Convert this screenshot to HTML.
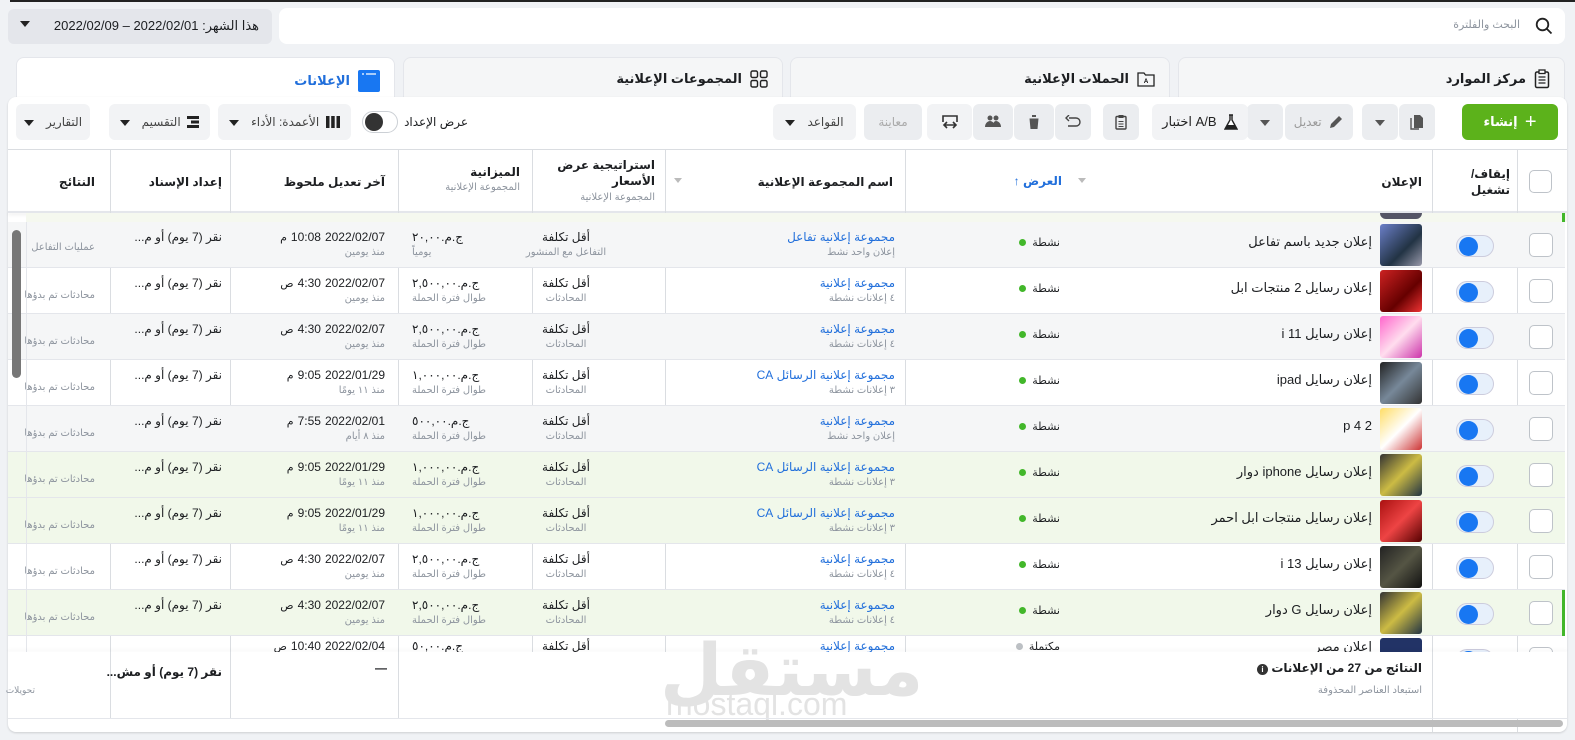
<!DOCTYPE html>
<html><head><meta charset="utf-8">
<style>
*{box-sizing:border-box;margin:0;padding:0}
body{width:1575px;height:740px;overflow:hidden;background:#f0f2f5;font-family:"Liberation Sans","DejaVu Sans",sans-serif;color:#1c1e21;position:relative;font-size:12px}
.a{position:absolute}
.r{direction:rtl;text-align:right;white-space:nowrap}
.btn{position:absolute;top:104px;height:36px;background:#ebedf0;border-radius:6px;display:flex;align-items:center;justify-content:center;font-size:12px;color:#444}
.tab{position:absolute;top:57px;height:42px;background:#f5f6f7;border-radius:8px 8px 0 0;border:1px solid #e4e6eb;border-bottom:none;font-weight:bold;font-size:13px;display:flex;align-items:center;justify-content:flex-end;padding-right:14px;gap:8px;direction:ltr}
.vl{position:absolute;width:1px;background:#dadde1}
.row{position:absolute;left:8px;width:1557px;height:46px;border-bottom:1px solid #e4e6eb}
.row>div{position:absolute}
.chk{left:1521px;top:11px;width:24px;height:24px;border:1px solid #bec3c9;border-radius:5px;background:#fff}
.tg{left:1448px;top:13px;width:38px;height:22px;border-radius:11px;background:#e7f0fb;border:1px solid #ccd}
.tg:before{content:"";position:absolute;left:2px;top:1px;width:19px;height:19px;border-radius:50%;background:#1877f2}
.th{left:1372px;top:2px;width:42px;height:42px;border-radius:3px}
.nm{right:193px;top:12px;font-size:13px}
.st{right:505px;top:14px;font-size:11px}
.st:after{content:"";display:inline-block;width:7px;height:7px;border-radius:50%;background:#42b72a;margin-right:6px}
.gs:after{background:#bcc0c4}
.l1{font-size:12px;top:8px}
.l2{font-size:10px;color:#8d949e;top:25px}
.bl{color:#216fdb}
.c5{right:670px}
.c6{left:508px;width:100px;text-align:center}
.c7{left:404px;text-align:left}
.c8{right:1180px}.c9{right:1343px}.c10{right:1470px}
.dt{display:flex;gap:4px;direction:ltr;white-space:nowrap;align-items:baseline}
.dt span:first-child{font-size:11px}
.hd{position:absolute;font-weight:bold;font-size:12px}
.sub{position:absolute;font-size:10px;color:#8d949e}
</style></head><body>
<div class="a" style="left:10px;top:0;width:1565px;height:2px;background:#222"></div>
<div class="a" style="left:279px;top:8px;width:1286px;height:36px;background:#fff;border-radius:8px"></div>
<div class="a r" style="right:55px;top:18px;font-size:11px;color:#8d949e">البحث والفلترة</div>
<svg class="a" style="left:1535px;top:17px" width="18" height="18" viewBox="0 0 18 18"><circle cx="7.5" cy="7.5" r="5.8" fill="none" stroke="#222" stroke-width="1.8"/><line x1="12" y1="12" x2="16.5" y2="16.5" stroke="#222" stroke-width="1.8"/></svg>
<div class="a" style="left:8px;top:9px;width:264px;height:35px;background:#e4e6eb;border-radius:6px"></div>
<div class="a" style="left:20px;top:21px;border:5px solid transparent;border-top:6px solid #222"></div>
<div class="a r" style="right:1316px;top:18px;font-size:13px;direction:rtl">هذا الشهر: 2022/02/01 – 2022/02/09</div>
<div class="tab" style="left:1178px;width:387px">مركز الموارد <svg width="16" height="20" viewBox="0 0 16 20"><rect x="1.5" y="3" width="13" height="15.5" rx="1.5" fill="none" stroke="#222" stroke-width="1.5"/><rect x="5" y="1" width="6" height="3.5" fill="#fff" stroke="#222" stroke-width="1.3"/><path d="M4.5 8h7M4.5 11h7M4.5 14h7" stroke="#222" stroke-width="1.3"/></svg></div>
<div class="tab" style="left:790px;width:380px">الحملات الإعلانية <svg width="18" height="16" viewBox="0 0 18 16"><path d="M1 2h6l1.5 2H17v11H1z" fill="none" stroke="#222" stroke-width="1.3"/><text x="9" y="12" font-size="6" text-anchor="middle" font-family="Liberation Sans">A</text></svg></div>
<div class="tab" style="left:403px;width:380px">المجموعات الإعلانية <svg width="18" height="18" viewBox="0 0 18 18" fill="none" stroke="#222" stroke-width="1.4"><rect x="1" y="1" width="6.5" height="6.5" rx="1.5"/><rect x="10.5" y="1" width="6.5" height="6.5" rx="1.5"/><rect x="1" y="10.5" width="6.5" height="6.5" rx="1.5"/><rect x="10.5" y="10.5" width="6.5" height="6.5" rx="1.5"/></svg></div>
<div class="tab" style="left:16px;width:379px;background:#fff;color:#216fdb;height:46px">الإعلانات <svg width="22" height="22" viewBox="0 0 22 22"><rect width="22" height="22" rx="2" fill="#1877f2"/><path d="M4 4h2M8 4h10" stroke="#fff" stroke-width="1.2"/></svg></div>
<div class="a" style="left:8px;top:97px;width:1559px;height:635px;background:#fff;border-radius:8px;box-shadow:0 1px 2px rgba(0,0,0,.15)"></div>
<div class="btn" style="left:1462px;width:96px;background:#5cb21b;color:#fff;font-weight:bold;font-size:13px">إنشاء &nbsp;<span style="font-size:20px;font-weight:normal">+</span></div>
<div class="btn" style="left:1399px;width:36px"><svg width="14" height="16" viewBox="0 0 14 16"><path d="M4 1h6l3 3v10H4z" fill="#555"/><path d="M1 4v11h8" fill="none" stroke="#555" stroke-width="1.4"/></svg></div>
<div class="btn" style="left:1362px;width:36px"><div style="border:5px solid transparent;border-top:6px solid #555;margin-top:6px"></div></div>
<div class="btn" style="left:1285px;width:68px;color:#999">تعديل &nbsp;<svg width="16" height="16" viewBox="0 0 16 16"><path d="M2 14l1-4 8-8 3 3-8 8z" fill="#555"/></svg></div>
<div class="btn" style="left:1247px;width:36px"><div style="border:5px solid transparent;border-top:6px solid #555;margin-top:6px"></div></div>
<div class="btn" style="left:1152px;width:96px;background:#f2f3f5;color:#222;font-size:13px">اختبار A/B &nbsp;<svg width="14" height="16" viewBox="0 0 14 16"><path d="M5 1h4M6 1v5L1 15h12L8 6V1" fill="#fff" stroke="#222" stroke-width="1.4"/><path d="M3 11h8l2 4H1z" fill="#222"/></svg></div>
<div class="btn" style="left:1103px;width:36px"><svg width="12" height="16" viewBox="0 0 12 16"><rect x="1" y="2.5" width="10" height="12.5" rx="1" fill="none" stroke="#444" stroke-width="1.4"/><rect x="3.5" y="1" width="5" height="3" fill="#444"/><path d="M3.5 7.5h5M3.5 10h5M3.5 12.5h5" stroke="#444"/></svg></div>
<div class="btn" style="left:1055px;width:36px"><svg width="16" height="14" viewBox="0 0 16 14"><path d="M4 3h7a4 4 0 0 1 0 8H3" fill="none" stroke="#444" stroke-width="1.4"/><path d="M4 0L1 3l3 3" fill="none" stroke="#444" stroke-width="1.4"/></svg></div>
<div class="btn" style="left:1014px;width:40px"><svg width="14" height="16" viewBox="0 0 14 16"><path d="M1 3h12M5 3V1h4v2M2.5 4.5l1 10.5h7l1-10.5z" fill="#555"/></svg></div>
<div class="btn" style="left:973px;width:40px"><svg width="18" height="14" viewBox="0 0 18 14"><circle cx="6" cy="3" r="2.5" fill="#555"/><circle cx="12" cy="3" r="2.5" fill="#555"/><path d="M1 12c0-4 3-6 5-6s5 2 5 6zM9 12c0-4 1-6 3-6s5 2 5 6z" fill="#555"/></svg></div>
<div class="btn" style="left:927px;width:45px;background:#f2f3f5"><svg width="18" height="16" viewBox="0 0 18 16"><path d="M2 8V2h14v6" fill="none" stroke="#333" stroke-width="1.6"/><path d="M4 11h10M6 8l-3 3 3 3M12 8l3 3-3 3" fill="none" stroke="#333" stroke-width="1.6"/></svg></div>
<div class="btn" style="left:864px;width:58px;color:#aaa">معاينة</div>
<div class="btn" style="left:773px;width:83px;background:#f2f3f5;color:#444"><div style="border:5px solid transparent;border-top:6px solid #222;margin-top:6px;margin-right:12px"></div>القواعد</div>
<div class="a r" style="right:1107px;top:115px;font-size:12px">عرض الإعداد</div>
<div class="a" style="left:362px;top:111px;width:36px;height:22px;border-radius:11px;border:1px solid #ccd0d5;background:#fff"><div style="position:absolute;left:2px;top:1px;width:18px;height:18px;border-radius:50%;background:#333"></div></div>
<div class="btn" style="left:218px;width:133px;background:#f2f3f5;color:#444"><div style="border:5px solid transparent;border-top:6px solid #222;margin-top:6px;margin-right:12px"></div>الأعمدة: الأداء &nbsp;<svg width="14" height="12"><rect x="0" width="3.5" height="12" fill="#222"/><rect x="5.2" width="3.5" height="12" fill="#222"/><rect x="10.5" width="3.5" height="12" fill="#222"/></svg></div>
<div class="btn" style="left:109px;width:101px;background:#f2f3f5;color:#444"><div style="border:5px solid transparent;border-top:6px solid #222;margin-top:6px;margin-right:12px"></div>التقسيم &nbsp;<svg width="12" height="12"><rect width="12" height="3" fill="#222"/><rect x="4" y="4.5" width="8" height="3" fill="#222"/><rect y="9" width="12" height="3" fill="#222"/></svg></div>
<div class="btn" style="left:16px;width:74px;background:#f2f3f5;color:#444"><div style="border:5px solid transparent;border-top:6px solid #222;margin-top:6px;margin-right:12px"></div>التقارير</div>
<div class="a" style="left:8px;top:149px;width:1559px;height:1px;background:#dadde1"></div>
<div class="a" style="left:8px;top:211px;width:1559px;height:2px;background:#e4e6eb;box-shadow:0 2px 3px rgba(0,0,0,.08)"></div>
<div class="a" style="left:1529px;top:170px;width:23px;height:23px;border:1px solid #bec3c9;border-radius:5px"></div>
<div class="hd r" style="right:65px;top:166px;line-height:16px">إيقاف/<br>تشغيل</div>
<div class="hd r" style="right:153px;top:175px">الإعلان</div>
<div class="hd r" style="right:513px;top:174px;color:#216fdb">العرض ↑</div>
<div class="a" style="left:1078px;top:178px;border:4px solid transparent;border-top:5px solid #bbb"></div>
<div class="hd r" style="right:682px;top:175px">اسم المجموعة الإعلانية</div>
<div class="a" style="left:674px;top:178px;border:4px solid transparent;border-top:5px solid #bbb"></div>
<div class="hd r" style="right:920px;top:157px;line-height:16px">استراتيجية عرض<br>الأسعار</div>
<div class="sub r" style="right:920px;top:192px">المجموعة الإعلانية</div>
<div class="hd r" style="right:1055px;top:165px">الميزانية</div>
<div class="sub r" style="right:1055px;top:182px">المجموعة الإعلانية</div>
<div class="hd r" style="right:1190px;top:175px">آخر تعديل ملحوظ</div>
<div class="hd r" style="right:1353px;top:175px">إعداد الإسناد</div>
<div class="hd r" style="right:1480px;top:175px">النتائج</div>
<div class="vl" style="left:1517px;top:150px;height:582px"></div>
<div class="vl" style="left:1432px;top:150px;height:582px"></div>
<div class="vl" style="left:905px;top:150px;height:502px"></div>
<div class="vl" style="left:665px;top:150px;height:502px"></div>
<div class="vl" style="left:532px;top:150px;height:502px"></div>
<div class="vl" style="left:398px;top:150px;height:568px"></div>
<div class="vl" style="left:230px;top:150px;height:568px"></div>
<div class="vl" style="left:110px;top:150px;height:568px"></div>
<div class="a" style="left:26px;top:213px;width:1541px;height:9px;background:#f5f8ef"></div>
<div class="a" style="left:1380px;top:213px;width:42px;height:6px;background:#556;border-radius:0 0 8px 8px"></div>
<div class="a" style="left:1562px;top:213px;width:3px;height:9px;background:#42b72a"></div>

<div class="row" style="top:222px;background:#f5f6f7">
<div class="chk"></div><div class="tg"></div><div class="th" style="background:linear-gradient(135deg,#6b7fc9,#234 60%,#99a)"></div>
<div class="nm r">إعلان جديد باسم تفاعل</div><div class="st r">نشطة</div>
<div class="r l1 c5 bl">مجموعة إعلانية تفاعل</div><div class="r l2 c5">إعلان واحد نشط</div>
<div class="l1 c6 r" style="text-align:center">أقل تكلفة</div><div class="l2 c6 r" style="text-align:center">التفاعل مع المنشور</div>
<div class="l1 c7">ج.م.٢٠,٠٠</div><div class="l2 c7">يومياً</div>
<div class="l1 c8 dt"><span>م</span><span>10:08</span><span>2022/02/07</span></div><div class="r l2 c8">منذ يومين</div>
<div class="r l1 c9">نقر (7 يوم) أو م...</div><div class="r l2 c10" style="top:20px">عمليات التفاعل</div></div>

<div class="row" style="top:268px">
<div class="chk"></div><div class="tg"></div><div class="th" style="background:linear-gradient(135deg,#c22,#600 60%,#e33)"></div>
<div class="nm r">إعلان رسايل 2 منتجات ابل</div><div class="st r">نشطة</div>
<div class="r l1 c5 bl">مجموعة إعلانية</div><div class="r l2 c5">٤ إعلانات نشطة</div>
<div class="l1 c6 r" style="text-align:center">أقل تكلفة</div><div class="l2 c6 r" style="text-align:center">المحادثات</div>
<div class="l1 c7">ج.م.٢,٥٠٠,٠٠</div><div class="l2 c7">طوال فترة الحملة</div>
<div class="l1 c8 dt"><span>ص</span><span>4:30</span><span>2022/02/07</span></div><div class="r l2 c8">منذ يومين</div>
<div class="r l1 c9">نقر (7 يوم) أو م...</div><div class="r l2 c10" style="top:22px">محادثات تم بدؤها</div></div>

<div class="row" style="top:314px;background:#f5f6f7">
<div class="chk"></div><div class="tg"></div><div class="th" style="background:linear-gradient(135deg,#f6c,#fde 50%,#c3a)"></div>
<div class="nm r">إعلان رسايل 11 i</div><div class="st r">نشطة</div>
<div class="r l1 c5 bl">مجموعة إعلانية</div><div class="r l2 c5">٤ إعلانات نشطة</div>
<div class="l1 c6 r" style="text-align:center">أقل تكلفة</div><div class="l2 c6 r" style="text-align:center">المحادثات</div>
<div class="l1 c7">ج.م.٢,٥٠٠,٠٠</div><div class="l2 c7">طوال فترة الحملة</div>
<div class="l1 c8 dt"><span>ص</span><span>4:30</span><span>2022/02/07</span></div><div class="r l2 c8">منذ يومين</div>
<div class="r l1 c9">نقر (7 يوم) أو م...</div><div class="r l2 c10" style="top:22px">محادثات تم بدؤها</div></div>

<div class="row" style="top:360px">
<div class="chk"></div><div class="tg"></div><div class="th" style="background:linear-gradient(135deg,#222,#789 50%,#333)"></div>
<div class="nm r">إعلان رسايل ipad</div><div class="st r">نشطة</div>
<div class="r l1 c5 bl">مجموعة إعلانية الرسائل CA</div><div class="r l2 c5">٣ إعلانات نشطة</div>
<div class="l1 c6 r" style="text-align:center">أقل تكلفة</div><div class="l2 c6 r" style="text-align:center">المحادثات</div>
<div class="l1 c7">ج.م.١,٠٠٠,٠٠</div><div class="l2 c7">طوال فترة الحملة</div>
<div class="l1 c8 dt"><span>م</span><span>9:05</span><span>2022/01/29</span></div><div class="r l2 c8">منذ ١١ يومًا</div>
<div class="r l1 c9">نقر (7 يوم) أو م...</div><div class="r l2 c10" style="top:22px">محادثات تم بدؤها</div></div>

<div class="row" style="top:406px;background:#f5f6f7">
<div class="chk"></div><div class="tg"></div><div class="th" style="background:linear-gradient(135deg,#fd6,#fff 50%,#c33)"></div>
<div class="nm r">p 4 2</div><div class="st r">نشطة</div>
<div class="r l1 c5 bl">مجموعة إعلانية</div><div class="r l2 c5">إعلان واحد نشط</div>
<div class="l1 c6 r" style="text-align:center">أقل تكلفة</div><div class="l2 c6 r" style="text-align:center">المحادثات</div>
<div class="l1 c7">ج.م.٥٠٠,٠٠</div><div class="l2 c7">طوال فترة الحملة</div>
<div class="l1 c8 dt"><span>م</span><span>7:55</span><span>2022/02/01</span></div><div class="r l2 c8">منذ ٨ أيام</div>
<div class="r l1 c9">نقر (7 يوم) أو م...</div><div class="r l2 c10" style="top:22px">محادثات تم بدؤها</div></div>

<div class="row" style="top:452px;background:#f1f8ea">
<div class="chk"></div><div class="tg"></div><div class="th" style="background:linear-gradient(135deg,#333,#cb4 50%,#234)"></div>
<div class="nm r">إعلان رسايل iphone دوار</div><div class="st r">نشطة</div>
<div class="r l1 c5 bl">مجموعة إعلانية الرسائل CA</div><div class="r l2 c5">٣ إعلانات نشطة</div>
<div class="l1 c6 r" style="text-align:center">أقل تكلفة</div><div class="l2 c6 r" style="text-align:center">المحادثات</div>
<div class="l1 c7">ج.م.١,٠٠٠,٠٠</div><div class="l2 c7">طوال فترة الحملة</div>
<div class="l1 c8 dt"><span>م</span><span>9:05</span><span>2022/01/29</span></div><div class="r l2 c8">منذ ١١ يومًا</div>
<div class="r l1 c9">نقر (7 يوم) أو م...</div><div class="r l2 c10" style="top:22px">محادثات تم بدؤها</div></div>

<div class="row" style="top:498px;background:#f1f8ea">
<div class="chk"></div><div class="tg"></div><div class="th" style="background:linear-gradient(135deg,#a11,#e44 50%,#500)"></div>
<div class="nm r">إعلان رسايل منتجات ابل احمر</div><div class="st r">نشطة</div>
<div class="r l1 c5 bl">مجموعة إعلانية الرسائل CA</div><div class="r l2 c5">٣ إعلانات نشطة</div>
<div class="l1 c6 r" style="text-align:center">أقل تكلفة</div><div class="l2 c6 r" style="text-align:center">المحادثات</div>
<div class="l1 c7">ج.م.١,٠٠٠,٠٠</div><div class="l2 c7">طوال فترة الحملة</div>
<div class="l1 c8 dt"><span>م</span><span>9:05</span><span>2022/01/29</span></div><div class="r l2 c8">منذ ١١ يومًا</div>
<div class="r l1 c9">نقر (7 يوم) أو م...</div><div class="r l2 c10" style="top:22px">محادثات تم بدؤها</div></div>

<div class="row" style="top:544px">
<div class="chk"></div><div class="tg"></div><div class="th" style="background:linear-gradient(135deg,#222,#554 50%,#111)"></div>
<div class="nm r">إعلان رسايل 13 i</div><div class="st r">نشطة</div>
<div class="r l1 c5 bl">مجموعة إعلانية</div><div class="r l2 c5">٤ إعلانات نشطة</div>
<div class="l1 c6 r" style="text-align:center">أقل تكلفة</div><div class="l2 c6 r" style="text-align:center">المحادثات</div>
<div class="l1 c7">ج.م.٢,٥٠٠,٠٠</div><div class="l2 c7">طوال فترة الحملة</div>
<div class="l1 c8 dt"><span>ص</span><span>4:30</span><span>2022/02/07</span></div><div class="r l2 c8">منذ يومين</div>
<div class="r l1 c9">نقر (7 يوم) أو م...</div><div class="r l2 c10" style="top:22px">محادثات تم بدؤها</div></div>

<div class="row" style="top:590px;background:#f1f8ea">
<div class="chk"></div><div class="tg"></div><div class="th" style="background:linear-gradient(135deg,#333,#cb4 50%,#234)"></div>
<div class="nm r">إعلان رسايل G دوار</div><div class="st r">نشطة</div>
<div class="r l1 c5 bl">مجموعة إعلانية</div><div class="r l2 c5">٤ إعلانات نشطة</div>
<div class="l1 c6 r" style="text-align:center">أقل تكلفة</div><div class="l2 c6 r" style="text-align:center">المحادثات</div>
<div class="l1 c7">ج.م.٢,٥٠٠,٠٠</div><div class="l2 c7">طوال فترة الحملة</div>
<div class="l1 c8 dt"><span>ص</span><span>4:30</span><span>2022/02/07</span></div><div class="r l2 c8">منذ يومين</div>
<div class="r l1 c9">نقر (7 يوم) أو م...</div><div class="r l2 c10" style="top:22px">محادثات تم بدؤها</div></div>

<div class="row" style="top:636px;height:16px;overflow:hidden;border:none">
<div class="chk"></div><div class="tg"></div><div class="th" style="background:#236"></div>
<div class="nm r" style="top:3px">إعلان مصر</div><div class="st gs r" style="top:4px">مكتملة</div>
<div class="r l1 c5 bl" style="top:3px">مجموعة إعلانية</div>
<div class="l1 c6 r" style="top:3px;text-align:center">أقل تكلفة</div>
<div class="l1 c7" style="top:3px">ج.م.٥٠,٠٠</div>
<div class="l1 c8 dt" style="top:3px"><span>ص</span><span>10:40</span><span>2022/02/04</span></div></div>
<div class="a" style="left:1562px;top:590px;width:3px;height:46px;background:#42b72a"></div>
<div class="a" style="left:26px;top:222px;width:1px;height:430px;background:#e4e6eb"></div>
<div class="a" style="left:12px;top:230px;width:9px;height:148px;background:#777;border-radius:5px"></div>
<div class="a" style="left:8px;top:652px;width:1559px;height:1px;background:#ccd0d5;box-shadow:0 -2px 3px rgba(0,0,0,.08)"></div>
<div class="a" style="left:8px;top:652px;width:1559px;height:66px;background:#fff"></div>
<div class="vl" style="left:1432px;top:652px;height:66px"></div>
<div class="vl" style="left:398px;top:652px;height:66px"></div>
<div class="vl" style="left:230px;top:652px;height:66px"></div>
<div class="vl" style="left:110px;top:652px;height:66px"></div>
<div class="a" style="left:660px;top:628px;font-size:72px;font-weight:bold;color:#e3e3e3;direction:rtl">مستقل</div>
<div class="a" style="left:666px;top:686px;font-size:32px;color:#e3e3e3">mostaql.com</div>
<div class="a r" style="right:153px;top:661px;font-weight:bold;font-size:12px">النتائج من 27 من الإعلانات <span style="display:inline-block;width:11px;height:11px;border-radius:50%;background:#333;color:#fff;font-size:8px;text-align:center;line-height:11px">i</span></div>
<div class="a r" style="right:153px;top:685px;font-size:10px;color:#8d949e">استبعاد العناصر المحذوفة</div>
<div class="a" style="left:375px;top:661px;font-weight:bold">—</div>
<div class="a r" style="right:1353px;top:665px;font-weight:bold;font-size:12px">نقر (7 يوم) أو مش...</div>
<div class="a r" style="right:1540px;top:685px;font-size:9px;color:#8d949e">تحويلات</div>
<div class="a" style="left:8px;top:718px;width:1559px;height:1px;background:#e4e6eb"></div>
<div class="a" style="left:665px;top:720px;width:898px;height:7px;background:#bcbcbc;border-radius:4px"></div>
</body></html>
